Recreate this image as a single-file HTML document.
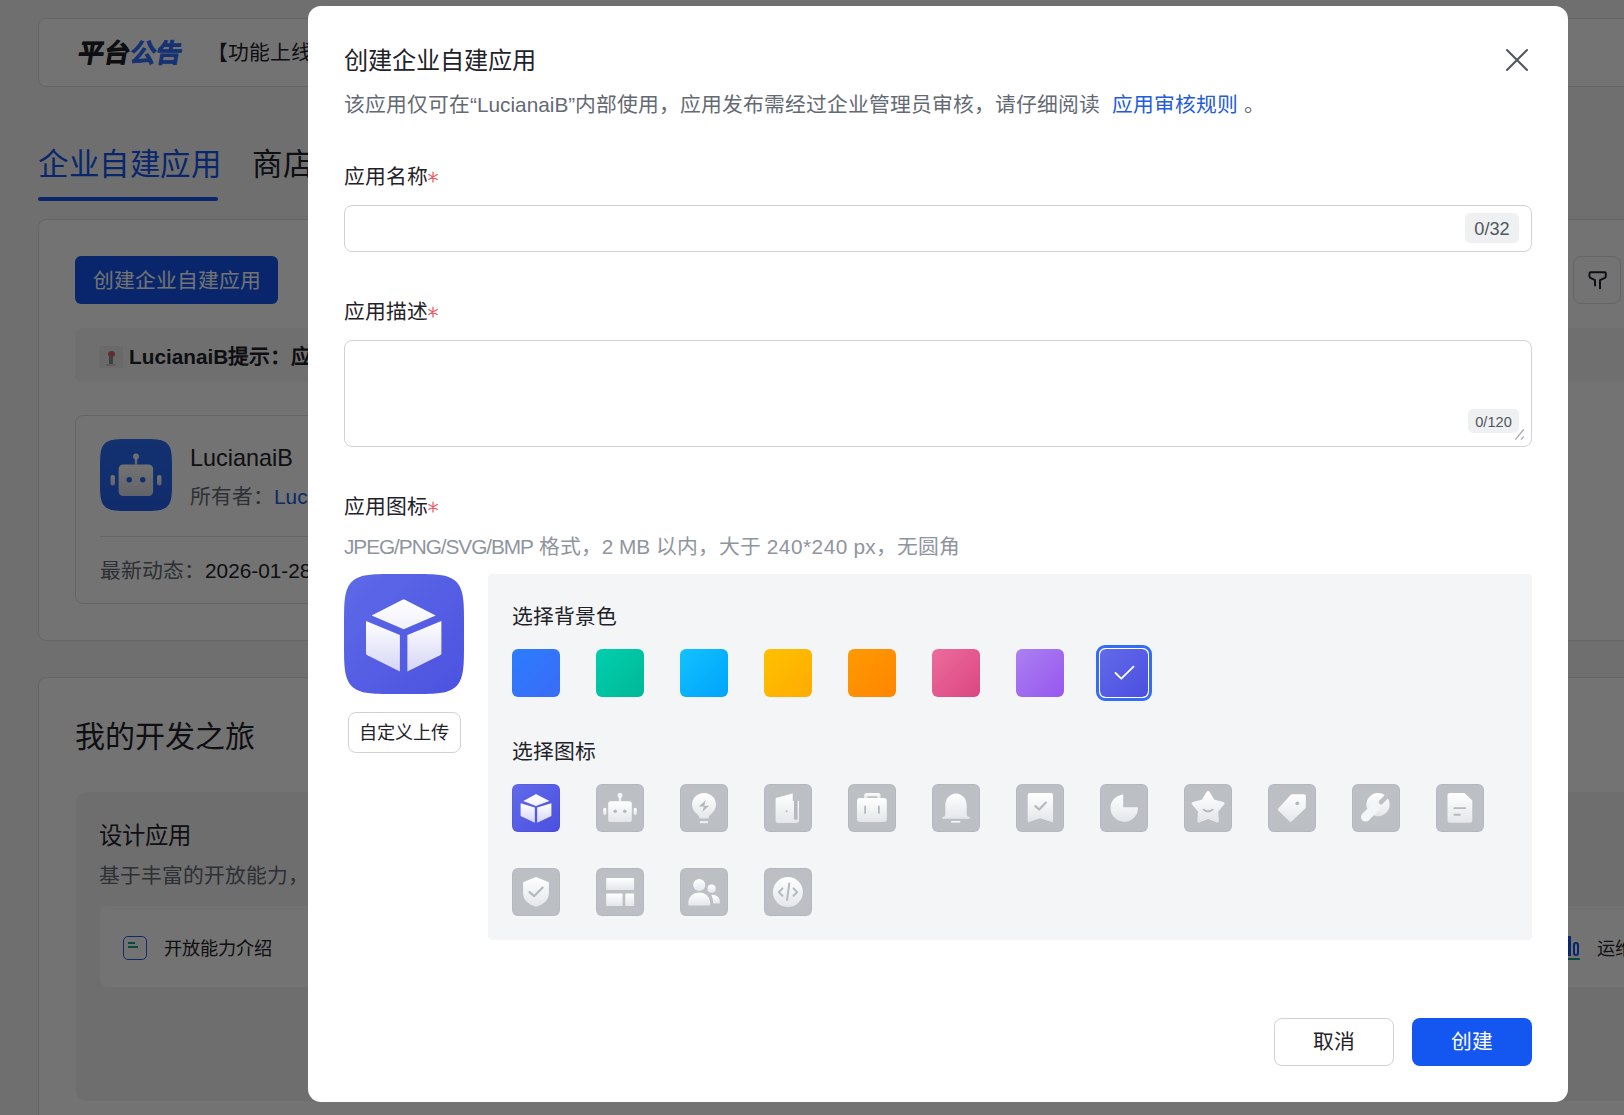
<!DOCTYPE html>
<html lang="zh-CN"><head><meta charset="utf-8">
<style>
*{box-sizing:border-box;margin:0;padding:0}
html,body{width:1624px;height:1115px;overflow:hidden}
body{position:relative;background:#f5f6f7;font-family:"Liberation Sans",sans-serif;color:#1f2329}
.a{position:absolute;white-space:nowrap}
.card{position:absolute;background:#fff;border:1px solid #dee0e3;border-radius:8px}
#mask{position:absolute;left:0;top:0;width:1624px;height:1115px;background:rgba(0,0,0,0.55)}
#modal{position:absolute;left:308px;top:6px;width:1260px;height:1096px;background:#fff;border-radius:13px}
.lbl{font-size:20.8px;line-height:30px;color:#1f2329}
.req{color:#f54a45;margin-left:1px;position:relative;top:4px;font-size:23px;line-height:0}
.inp{position:absolute;left:36px;width:1188px;border:1px solid #d0d3d6;border-radius:8px;background:#fff}
.cnt{position:absolute;background:#eff0f1;border-radius:5px;color:#51565d;text-align:center}
.sw{position:absolute;top:643px;width:48px;height:48px;border-radius:6px}
.tile{position:absolute;width:48px;height:48px;border-radius:6px;background:#bcc0c5;box-shadow:inset 0 0 0 1px rgba(0,0,0,0.035)}
.tile svg{position:absolute;left:0;top:0;width:48px;height:48px}
</style></head><body>

<!-- ============ BACKGROUND PAGE ============ -->
<div class="card" style="left:38px;top:18px;width:1640px;height:69px"></div>
<div class="a" style="left:79px;top:38px;font-size:25.5px;line-height:30px;font-weight:bold;letter-spacing:0px;transform:skewX(-10deg);-webkit-text-stroke:0.9px currentColor;color:#1f2329"><span>平台</span><span style="color:#3370ff">公告</span></div>
<div class="a" style="left:207px;top:38px;font-size:20.8px;line-height:30px;color:#1f2329">【功能上线】</div>

<div class="a" style="left:38px;top:147.5px;font-size:30.5px;line-height:32px;letter-spacing:0.6px;color:#1456f0">企业自建应用</div>
<div class="a" style="left:252px;top:147.5px;font-size:30.5px;line-height:32px;letter-spacing:0.6px;color:#1f2329">商店应用</div>
<div class="a" style="left:38px;top:197px;width:180px;height:4px;border-radius:2px;background:#1456f0"></div>

<div class="card" style="left:38px;top:219px;width:1640px;height:422px"></div>
<div class="a" style="left:75px;top:256px;width:203px;height:48px;border-radius:6px;background:#1456f0;color:#fff;font-size:20.8px;line-height:50px;text-align:center">创建企业自建应用</div>
<div class="a" style="left:1573px;top:256px;width:48px;height:48px;border-radius:8px;border:1px solid #dee0e3;background:#fff">
  <svg width="48" height="48" viewBox="0 0 48 48" style="position:absolute;left:-1px;top:-1px"><path d="M16.5 20.5V17.5Q16.5 16.3 17.7 16.3H31.6Q32.8 16.3 32.8 17.5V20.5Q32.8 21.4 31.9 21.9L27 24.2V32.2M16.5 20.5Q16.5 21.4 17.4 21.9L22 24.2V29.4" fill="none" stroke="#1f2329" stroke-width="2" stroke-linecap="round" stroke-linejoin="round"/></svg>
</div>
<div class="a" style="left:75px;top:328px;width:1600px;height:54px;border-radius:6px;background:#f5f6f7"></div>
<div class="a" style="left:99px;top:346px;width:24px;height:22px;border-radius:2px;background:#ecebeb;overflow:hidden"><div style="position:absolute;left:8.5px;top:5px;width:7px;height:6px;border-radius:50%;background:#d9666e"></div><div style="position:absolute;left:10px;top:10px;width:4px;height:8px;background:#8c8c8c"></div><div style="position:absolute;left:7px;top:18px;width:10px;height:2px;background:#c9c9c9"></div></div>
<div class="a" style="left:129px;top:342px;font-size:20.8px;line-height:30px;font-weight:bold;color:#1f2329">LucianaiB提示：应用</div>

<div class="card" style="left:75px;top:415px;width:1200px;height:189px"></div>
<div class="a" style="left:100px;top:439px;width:72px;height:72px">
  <svg width="72" height="72" viewBox="0 0 120 120" style="position:absolute;left:0;top:0"><defs><linearGradient id="abg" x1="0" y1="0" x2="0" y2="1"><stop offset="0" stop-color="#2a6ef7"/><stop offset="1" stop-color="#2461ee"/></linearGradient></defs><path d="M120.00 60.00L119.98 76.43L119.93 81.68L119.83 85.48L119.70 88.57L119.54 91.21L119.33 93.53L119.09 95.61L118.81 97.51L118.49 99.25L118.13 100.86L117.73 102.35L117.29 103.75L116.81 105.05L116.29 106.28L115.73 107.43L115.12 108.51L114.47 109.53L113.77 110.49L113.03 111.39L112.23 112.23L111.39 113.03L110.49 113.77L109.53 114.47L108.51 115.12L107.43 115.73L106.28 116.29L105.05 116.81L103.75 117.29L102.35 117.73L100.86 118.13L99.25 118.49L97.51 118.81L95.61 119.09L93.53 119.33L91.21 119.54L88.57 119.70L85.48 119.83L81.68 119.93L76.43 119.98L60.00 120.00L43.57 119.98L38.32 119.93L34.52 119.83L31.43 119.70L28.79 119.54L26.47 119.33L24.39 119.09L22.49 118.81L20.75 118.49L19.14 118.13L17.65 117.73L16.25 117.29L14.95 116.81L13.72 116.29L12.57 115.73L11.49 115.12L10.47 114.47L9.51 113.77L8.61 113.03L7.77 112.23L6.97 111.39L6.23 110.49L5.53 109.53L4.88 108.51L4.27 107.43L3.71 106.28L3.19 105.05L2.71 103.75L2.27 102.35L1.87 100.86L1.51 99.25L1.19 97.51L0.91 95.61L0.67 93.53L0.46 91.21L0.30 88.57L0.17 85.48L0.07 81.68L0.02 76.43L0.00 60.00L0.02 43.57L0.07 38.32L0.17 34.52L0.30 31.43L0.46 28.79L0.67 26.47L0.91 24.39L1.19 22.49L1.51 20.75L1.87 19.14L2.27 17.65L2.71 16.25L3.19 14.95L3.71 13.72L4.27 12.57L4.88 11.49L5.53 10.47L6.23 9.51L6.97 8.61L7.77 7.77L8.61 6.97L9.51 6.23L10.47 5.53L11.49 4.88L12.57 4.27L13.72 3.71L14.95 3.19L16.25 2.71L17.65 2.27L19.14 1.87L20.75 1.51L22.49 1.19L24.39 0.91L26.47 0.67L28.79 0.46L31.43 0.30L34.52 0.17L38.32 0.07L43.57 0.02L60.00 0.00L76.43 0.02L81.68 0.07L85.48 0.17L88.57 0.30L91.21 0.46L93.53 0.67L95.61 0.91L97.51 1.19L99.25 1.51L100.86 1.87L102.35 2.27L103.75 2.71L105.05 3.19L106.28 3.71L107.43 4.27L108.51 4.88L109.53 5.53L110.49 6.23L111.39 6.97L112.23 7.77L113.03 8.61L113.77 9.51L114.47 10.47L115.12 11.49L115.73 12.57L116.29 13.72L116.81 14.95L117.29 16.25L117.73 17.65L118.13 19.14L118.49 20.75L118.81 22.49L119.09 24.39L119.33 26.47L119.54 28.79L119.70 31.43L119.83 34.52L119.93 38.32L119.98 43.57Z" fill="url(#abg)"/></svg>
  <svg width="72" height="72" viewBox="0 0 48 48" style="position:absolute;left:0;top:0"><defs><linearGradient id="rb" x1="0" y1="0" x2="0" y2="1"><stop offset="0" stop-color="#fff"/><stop offset="1" stop-color="#d7dcea"/></linearGradient></defs>
  <circle cx="24" cy="11.7" r="2" fill="url(#rb)"/><rect x="23.2" y="12" width="1.6" height="5" fill="url(#rb)"/>
  <rect x="12.4" y="17" width="23" height="21" rx="3" fill="url(#rb)"/><circle cx="19.5" cy="27.2" r="1.8" fill="#2667f2"/><circle cx="28.5" cy="27.2" r="1.8" fill="#2667f2"/>
  <rect x="7" y="24" width="3" height="7" rx="1.5" fill="url(#rb)"/><rect x="38" y="24" width="3" height="7" rx="1.5" fill="url(#rb)"/></svg>
</div>
<div class="a" style="left:190px;top:443px;font-size:23.4px;line-height:30px;color:#1f2329">LucianaiB</div>
<div class="a" style="left:190px;top:482px;font-size:20.8px;line-height:30px;color:#646a73">所有者：<span style="color:#245bdb">LucianaiB</span></div>
<div class="a" style="left:100px;top:536px;width:1150px;height:1px;background:#dee0e3"></div>
<div class="a" style="left:100px;top:556px;font-size:20.8px;line-height:30px;color:#646a73">最新动态：<span style="color:#1f2329">2026-01-28</span></div>

<div class="card" style="left:38px;top:677px;width:1640px;height:600px"></div>
<div class="a" style="left:75px;top:721px;font-size:30px;line-height:32px;color:#1f2329">我的开发之旅</div>
<div class="a" style="left:76px;top:792px;width:1600px;height:309px;border-radius:10px;background:#f4f4f5"></div>
<div class="a" style="left:99px;top:821px;font-size:23.4px;line-height:30px;color:#1f2329">设计应用</div>
<div class="a" style="left:99px;top:861px;font-size:20.8px;line-height:30px;color:#646a73">基于丰富的开放能力，</div>
<div class="a" style="left:100px;top:906px;width:1600px;height:81px;border-radius:8px;background:#fff"></div>
<div class="a" style="left:123px;top:936px;width:24px;height:24px;border:1.8px solid #2b5ee8;border-radius:5px"><div style="position:absolute;left:4px;top:4.5px;width:6.5px;height:2px;background:#14a68c"></div><div style="position:absolute;left:4px;top:9px;width:10px;height:2px;background:#14a68c"></div></div>
<div class="a" style="left:164px;top:934px;font-size:18.2px;line-height:30px;color:#1f2329">开放能力介绍</div>
<div class="a" style="left:1566px;top:936px;width:16px;height:25px"><div style="position:absolute;left:2px;top:0;width:3px;height:20px;background:#1456f0"></div><div style="position:absolute;left:7px;top:6px;width:6px;height:14px;border:2.5px solid #1456f0;border-radius:3px"></div><div style="position:absolute;left:0;top:22px;width:14px;height:2px;background:#14a68c"></div></div>
<div class="a" style="left:1597px;top:934px;font-size:18.2px;line-height:30px;color:#1f2329">运维</div>

<div id="mask"></div>

<!-- ============ MODAL ============ -->
<div id="modal">
  <div class="a" style="left:36px;top:39.5px;font-size:24.2px;line-height:30px;color:#1f2329">创建企业自建应用</div>
  <svg class="a" style="left:1197px;top:42px" width="24" height="24" viewBox="0 0 24 24"><path d="M2 2L22 22M22 2L2 22" stroke="#51565d" stroke-width="2" stroke-linecap="round"/></svg>
  <div class="a" style="left:36px;top:84px;font-size:20.8px;line-height:30px;color:#646a73">该应用仅可在“LucianaiB”内部使用，应用发布需经过企业管理员审核，请仔细阅读 <span style="color:#245bdb;margin-left:6px">应用审核规则</span> 。</div>

  <div class="a lbl" style="left:36px;top:156px">应用名称</div><svg class="a" width="12" height="12" viewBox="0 0 12 12" style="left:119.1px;top:164.9px"><path d="M6 1V11M1.7 3.5L10.3 8.5M1.7 8.5L10.3 3.5" stroke="#ee5a62" stroke-width="1.25" stroke-linecap="round"/></svg>
  <div class="inp" style="top:199px;height:47px"></div>
  <div class="cnt" style="left:1157px;top:207px;width:54px;height:30px;font-size:18.2px;line-height:32px">0/32</div>

  <div class="a lbl" style="left:36px;top:291px">应用描述</div><svg class="a" width="12" height="12" viewBox="0 0 12 12" style="left:119.1px;top:300.4px"><path d="M6 1V11M1.7 3.5L10.3 8.5M1.7 8.5L10.3 3.5" stroke="#ee5a62" stroke-width="1.25" stroke-linecap="round"/></svg>
  <div class="inp" style="top:334px;height:107px"></div>
  <div class="cnt" style="left:1160px;top:403px;width:51px;height:24px;font-size:14.6px;line-height:27px">0/120</div>
  <svg class="a" style="left:1206px;top:422px" width="12" height="12" viewBox="0 0 12 12"><path d="M1.3 11.6L9.7 1.5M7 11.6L9.7 8.5" stroke="#a9adb2" stroke-width="1.3"/></svg>

  <div class="a lbl" style="left:36px;top:485.5px">应用图标</div><svg class="a" width="12" height="12" viewBox="0 0 12 12" style="left:119.1px;top:494.9px"><path d="M6 1V11M1.7 3.5L10.3 8.5M1.7 8.5L10.3 3.5" stroke="#ee5a62" stroke-width="1.25" stroke-linecap="round"/></svg>
  <div class="a" style="left:36px;top:526px;font-size:20.8px;line-height:30px;color:#8f959e"><span style="letter-spacing:-1.05px">JPEG/PNG/SVG/BMP</span> 格式，2 MB 以内，大于 <span style="letter-spacing:0.5px">240*240</span> px，无圆角</div>

  <div class="a" style="left:36px;top:568px;width:120px;height:120px">
    <svg width="120" height="120" viewBox="0 0 120 120"><defs><linearGradient id="bgI" x1="0" y1="0" x2="1" y2="1"><stop offset="0" stop-color="#5d6ae8"/><stop offset="1" stop-color="#4c52df"/></linearGradient></defs>
    <path d="M120.00 60.00L119.98 76.43L119.93 81.68L119.83 85.48L119.70 88.57L119.54 91.21L119.33 93.53L119.09 95.61L118.81 97.51L118.49 99.25L118.13 100.86L117.73 102.35L117.29 103.75L116.81 105.05L116.29 106.28L115.73 107.43L115.12 108.51L114.47 109.53L113.77 110.49L113.03 111.39L112.23 112.23L111.39 113.03L110.49 113.77L109.53 114.47L108.51 115.12L107.43 115.73L106.28 116.29L105.05 116.81L103.75 117.29L102.35 117.73L100.86 118.13L99.25 118.49L97.51 118.81L95.61 119.09L93.53 119.33L91.21 119.54L88.57 119.70L85.48 119.83L81.68 119.93L76.43 119.98L60.00 120.00L43.57 119.98L38.32 119.93L34.52 119.83L31.43 119.70L28.79 119.54L26.47 119.33L24.39 119.09L22.49 118.81L20.75 118.49L19.14 118.13L17.65 117.73L16.25 117.29L14.95 116.81L13.72 116.29L12.57 115.73L11.49 115.12L10.47 114.47L9.51 113.77L8.61 113.03L7.77 112.23L6.97 111.39L6.23 110.49L5.53 109.53L4.88 108.51L4.27 107.43L3.71 106.28L3.19 105.05L2.71 103.75L2.27 102.35L1.87 100.86L1.51 99.25L1.19 97.51L0.91 95.61L0.67 93.53L0.46 91.21L0.30 88.57L0.17 85.48L0.07 81.68L0.02 76.43L0.00 60.00L0.02 43.57L0.07 38.32L0.17 34.52L0.30 31.43L0.46 28.79L0.67 26.47L0.91 24.39L1.19 22.49L1.51 20.75L1.87 19.14L2.27 17.65L2.71 16.25L3.19 14.95L3.71 13.72L4.27 12.57L4.88 11.49L5.53 10.47L6.23 9.51L6.97 8.61L7.77 7.77L8.61 6.97L9.51 6.23L10.47 5.53L11.49 4.88L12.57 4.27L13.72 3.71L14.95 3.19L16.25 2.71L17.65 2.27L19.14 1.87L20.75 1.51L22.49 1.19L24.39 0.91L26.47 0.67L28.79 0.46L31.43 0.30L34.52 0.17L38.32 0.07L43.57 0.02L60.00 0.00L76.43 0.02L81.68 0.07L85.48 0.17L88.57 0.30L91.21 0.46L93.53 0.67L95.61 0.91L97.51 1.19L99.25 1.51L100.86 1.87L102.35 2.27L103.75 2.71L105.05 3.19L106.28 3.71L107.43 4.27L108.51 4.88L109.53 5.53L110.49 6.23L111.39 6.97L112.23 7.77L113.03 8.61L113.77 9.51L114.47 10.47L115.12 11.49L115.73 12.57L116.29 13.72L116.81 14.95L117.29 16.25L117.73 17.65L118.13 19.14L118.49 20.75L118.81 22.49L119.09 24.39L119.33 26.47L119.54 28.79L119.70 31.43L119.83 34.52L119.93 38.32L119.98 43.57Z" fill="url(#bgI)"/>
    <path d="M27.6 41.5L58.5 25.8Q59.7 25.2 60.9 25.8L91.7 41.5L59.7 55.3Z" fill="url(#tg)"/>
    <path d="M22 47L55.9 61V97.4L23.4 81.3Q22 80.6 22 79.2Z" fill="url(#cg)"/>
    <path d="M63.4 61L97.4 47V79.2Q97.4 80.6 96 81.3L63.4 97.4Z" fill="url(#cg)"/></svg>
  </div>
  <div class="a" style="left:40px;top:706px;width:113px;height:41px;border:1px solid #d0d3d6;border-radius:8px;font-size:18.2px;line-height:40px;text-indent:-1px;text-align:center;color:#1f2329">自定义上传</div>

  <div class="a" style="left:180px;top:568px;width:1044px;height:366px;background:#f4f5f7;border-radius:4px"></div>
  <div class="a" style="left:204px;top:596px;font-size:20.8px;line-height:30px;color:#1f2329">选择背景色</div>
  <div class="sw" style="left:204px;background:linear-gradient(135deg,#2b7cff,#3a6cf5);"></div>
  <div class="sw" style="left:288px;background:linear-gradient(135deg,#00cfae,#00b896);"></div>
  <div class="sw" style="left:372px;background:linear-gradient(135deg,#12c2ff,#00a3fa);"></div>
  <div class="sw" style="left:456px;background:linear-gradient(135deg,#ffc100,#ffab00);"></div>
  <div class="sw" style="left:540px;background:linear-gradient(135deg,#ff9a00,#ff8500);"></div>
  <div class="sw" style="left:624px;background:linear-gradient(135deg,#ec6c9c,#db4682);"></div>
  <div class="sw" style="left:708px;background:linear-gradient(135deg,#ac80f2,#9657ee);"></div>
  <div class="sw" style="left:792px;background:linear-gradient(135deg,#626ae9,#4b4fe0);"><div style="position:absolute;left:-4px;top:-4px;width:56px;height:56px;border:3px solid #336df4;border-radius:9px;box-shadow:inset 0 0 0 1px #fff"></div><svg width="48" height="48" viewBox="0 0 48 48" style="position:absolute;left:0;top:0"><path d="M15.5 30.5L21.3 36.2L33.5 24.2" fill="none" stroke="#fff" stroke-width="1.8" stroke-linecap="round" stroke-linejoin="round" transform="translate(0,-6.5)"/></svg></div>
  <div class="a" style="left:204px;top:731px;font-size:20.8px;line-height:30px;color:#1f2329">选择图标</div>
  <svg width="0" height="0" style="position:absolute"><defs><linearGradient id="wg" x1="0" y1="0" x2="0" y2="1"><stop offset="0" stop-color="#ffffff"/><stop offset="1" stop-color="#e4e6ea"/></linearGradient><linearGradient id="cg" x1="0" y1="0" x2="0" y2="1"><stop offset="0" stop-color="#ffffff"/><stop offset="1" stop-color="#d5d5f6"/></linearGradient><linearGradient id="tg" x1="0" y1="0" x2="0" y2="1"><stop offset="0" stop-color="#ffffff"/><stop offset="1" stop-color="#f1f1fc"/></linearGradient></defs></svg>
  <div class="tile" style="left:204px;top:778px;background:linear-gradient(135deg,#626ae9,#4b4fe0);"><svg viewBox="0 0 48 48"><path d="M11.3 17L23.7 10.2Q24 10 24.3 10.2L37.4 17L23.9 22Z" fill="url(#tg)"/><path d="M8.6 19.2L22.8 23.4V38.8L9.2 32.3Q8.6 32 8.6 31.4Z" fill="url(#cg)"/><path d="M25.2 23.4L39.4 19.2V31.4Q39.4 32 38.8 32.3L25.2 38.8Z" fill="url(#cg)"/></svg></div>
  <div class="tile" style="left:288px;top:778px;"><svg viewBox="0 0 48 48"><circle cx="24" cy="11.6" r="2.5" fill="url(#wg)"/><rect x="22.8" y="12" width="2.4" height="6" fill="url(#wg)"/><rect x="12.2" y="17.2" width="23.6" height="20.8" rx="2.6" fill="url(#wg)"/><circle cx="19.2" cy="27.3" r="1.8" fill="#b5b9bf"/><circle cx="28.8" cy="27.3" r="1.8" fill="#b5b9bf"/><rect x="7.2" y="23.8" width="3.2" height="7.4" rx="1.6" fill="url(#wg)"/><rect x="37.6" y="23.8" width="3.2" height="7.4" rx="1.6" fill="url(#wg)"/></svg></div>
  <div class="tile" style="left:372px;top:778px;"><svg viewBox="0 0 48 48"><path d="M24 9C17.4 9 12 14 12 20.6C12 25 14.4 28.3 17.5 30.5Q19.5 32 19.6 34.6H28.4Q28.5 32 30.5 30.5C33.6 28.3 36 25 36 20.6C36 14 30.6 9 24 9Z" fill="url(#wg)"/><rect x="19.6" y="37.2" width="8.6" height="2" rx="1" fill="url(#wg)"/><path d="M25.9 16L18.9 22.6H24L22.3 28L29.2 21.8H24.2Z" fill="#b5b9bf"/></svg></div>
  <div class="tile" style="left:456px;top:778px;"><svg viewBox="0 0 48 48"><path d="M12.5 13.8L28.7 9.4V17H35V36.5Q35 39 32.5 39H14Q11.6 39 11.6 36.5V15.2Q11.6 14.1 12.5 13.8Z" fill="url(#wg)"/><rect x="30" y="17" width="3.6" height="18.6" fill="#b5b9bf"/><circle cx="22.6" cy="27.3" r="1" fill="#b5b9bf"/></svg></div>
  <div class="tile" style="left:540px;top:778px;"><svg viewBox="0 0 48 48"><path d="M18.5 9H30Q32.5 9 32.5 11.5V14H29.2V12.2H19.4V14H16.1V11.5Q16.1 9 18.5 9Z" fill="url(#wg)"/><rect x="9" y="13.9" width="29.8" height="24" rx="3" fill="url(#wg)"/><rect x="16.2" y="21.6" width="1.8" height="8.3" rx="0.9" fill="#b5b9bf"/><rect x="30" y="21.6" width="1.8" height="8.3" rx="0.9" fill="#b5b9bf"/></svg></div>
  <div class="tile" style="left:624px;top:778px;"><svg viewBox="0 0 48 48"><path d="M24 9.6C18.3 9.6 13.3 14.5 13.3 21.5V30.5Q13.3 32.5 11 33L10.2 33.3V34.8H37.8V33.3L37 33Q34.7 32.5 34.7 30.5V21.5C34.7 14.5 29.7 9.6 24 9.6Z" fill="url(#wg)"/><rect x="19" y="37" width="9.5" height="1.8" rx="0.9" fill="url(#wg)"/></svg></div>
  <div class="tile" style="left:708px;top:778px;"><svg viewBox="0 0 48 48"><path d="M13.7 9H35Q37 9 37 11V37.3Q37 38.7 35.8 38L24.1 34.3L12.9 38Q11.7 38.7 11.7 37.3V11Q11.7 9 13.7 9Z" fill="url(#wg)"/><path d="M19.3 22.2L23.2 25.5L29.9 18.6" fill="none" stroke="#b5b9bf" stroke-width="2.2" stroke-linecap="round" stroke-linejoin="round"/></svg></div>
  <div class="tile" style="left:792px;top:778px;"><svg viewBox="0 0 48 48"><path d="M23.2 10.4A13.7 13.7 0 1 0 37.9 23.3H23.2Z" fill="url(#wg)"/></svg></div>
  <div class="tile" style="left:876px;top:778px;"><svg viewBox="0 0 48 48"><path d="M24.10 8.70L29.33 17.10L38.94 19.48L32.56 27.05L33.27 36.92L24.10 33.20L14.93 36.92L15.64 27.05L9.26 19.48L18.87 17.10Z" fill="url(#wg)" stroke="url(#wg)" stroke-width="3.2" stroke-linejoin="round"/><path d="M19.6 25.6Q24.1 29.4 28.6 25.6" fill="none" stroke="#b3b0b3" stroke-width="1.7" stroke-linecap="round"/></svg></div>
  <div class="tile" style="left:960px;top:778px;"><svg viewBox="0 0 48 48"><path d="M22.3 11.3Q23.3 10.3 24.6 10.3H36Q37.8 10.3 37.8 12V23.2Q37.8 24 37.2 24.6L23.6 37.6Q22.6 38.6 21.6 37.6L10.3 26.6Q9.3 25.6 10.3 24.6Z" fill="url(#wg)"/><circle cx="29.3" cy="19.3" r="1.9" fill="#b5b9bf"/></svg></div>
  <div class="tile" style="left:1044px;top:778px;"><svg viewBox="0 0 48 48"><mask id="wm" maskUnits="userSpaceOnUse" x="0" y="0" width="48" height="48"><rect width="48" height="48" fill="#fff"/><path d="M29 18.2L39 8.2" stroke="#000" stroke-width="4.6" stroke-linecap="round"/></mask><g mask="url(#wm)"><circle cx="26" cy="20.6" r="11.6" fill="url(#wg)"/><path d="M24 22.6L13.6 33" stroke="#f4f5f6" stroke-width="9.2" stroke-linecap="round"/></g></svg></div>
  <div class="tile" style="left:1128px;top:778px;"><svg viewBox="0 0 48 48"><path d="M13.7 9H28.5L36.3 16.4V36.6Q36.3 38.8 34.1 38.8H13.7Q11.5 38.8 11.5 36.6V11.2Q11.5 9 13.7 9Z" fill="url(#wg)"/><rect x="17.4" y="23.2" width="12.8" height="1.9" rx="0.95" fill="#b5b9bf"/><rect x="17.4" y="29.8" width="7.4" height="1.9" rx="0.95" fill="#b5b9bf"/></svg></div>
  <div class="tile" style="left:204px;top:862px;"><svg viewBox="0 0 48 48"><path d="M24 9L36.9 14.2V25.5C36.9 31.8 31.4 36.7 24.2 38.7Q24 38.8 23.8 38.7C16.6 36.7 11.1 31.8 11.1 25.5V14.2Z" fill="url(#wg)"/><path d="M17.5 24.1L22.3 28.1L30.7 19.6" fill="none" stroke="#b5b9bf" stroke-width="2.2" stroke-linecap="round" stroke-linejoin="round"/></svg></div>
  <div class="tile" style="left:288px;top:862px;"><svg viewBox="0 0 48 48"><rect x="10.2" y="9.9" width="27.9" height="12" rx="0.6" fill="url(#wg)"/><rect x="10.2" y="25.4" width="16.4" height="12.5" rx="0.6" fill="url(#wg)"/><rect x="29.3" y="25.4" width="8.8" height="12.5" rx="0.6" fill="url(#wg)"/></svg></div>
  <div class="tile" style="left:372px;top:862px;"><svg viewBox="0 0 48 48"><circle cx="19.2" cy="17" r="6.1" fill="url(#wg)"/><path d="M8.2 36.2C8.2 29 13 24.6 19.2 24.6C25.4 24.6 30.3 29 30.3 36.2Q30.3 37.4 29.1 37.4H9.4Q8.2 37.4 8.2 36.2Z" fill="url(#wg)"/><circle cx="31.6" cy="20.7" r="4.1" fill="url(#wg)"/><path d="M32 26.7C36.7 26.6 40 29.3 40 34.6Q40 35.6 39 35.6H33.2Q33.2 30.5 31.4 27.2Z" fill="url(#wg)"/></svg></div>
  <div class="tile" style="left:456px;top:862px;"><svg viewBox="0 0 48 48"><circle cx="23.9" cy="24.1" r="15" fill="url(#wg)"/><path d="M18.5 20.4L14.8 24.1L18.5 27.8M29.5 20.4L33.2 24.1L29.5 27.8" fill="none" stroke="#b5b9bf" stroke-width="2" stroke-linecap="round" stroke-linejoin="round"/><path d="M25.3 15.4L23 32" fill="none" stroke="#b5b9bf" stroke-width="2" stroke-linecap="round"/></svg></div>

  <div class="a" style="left:966px;top:1012px;width:120px;height:48px;border:1px solid #d0d3d6;border-radius:8px;font-size:20.8px;line-height:46px;text-align:center;color:#1f2329">取消</div>
  <div class="a" style="left:1104px;top:1012px;width:120px;height:48px;background:#1456f0;border-radius:8px;font-size:20.8px;line-height:48px;text-align:center;color:#fff">创建</div>
</div>

</body></html>
